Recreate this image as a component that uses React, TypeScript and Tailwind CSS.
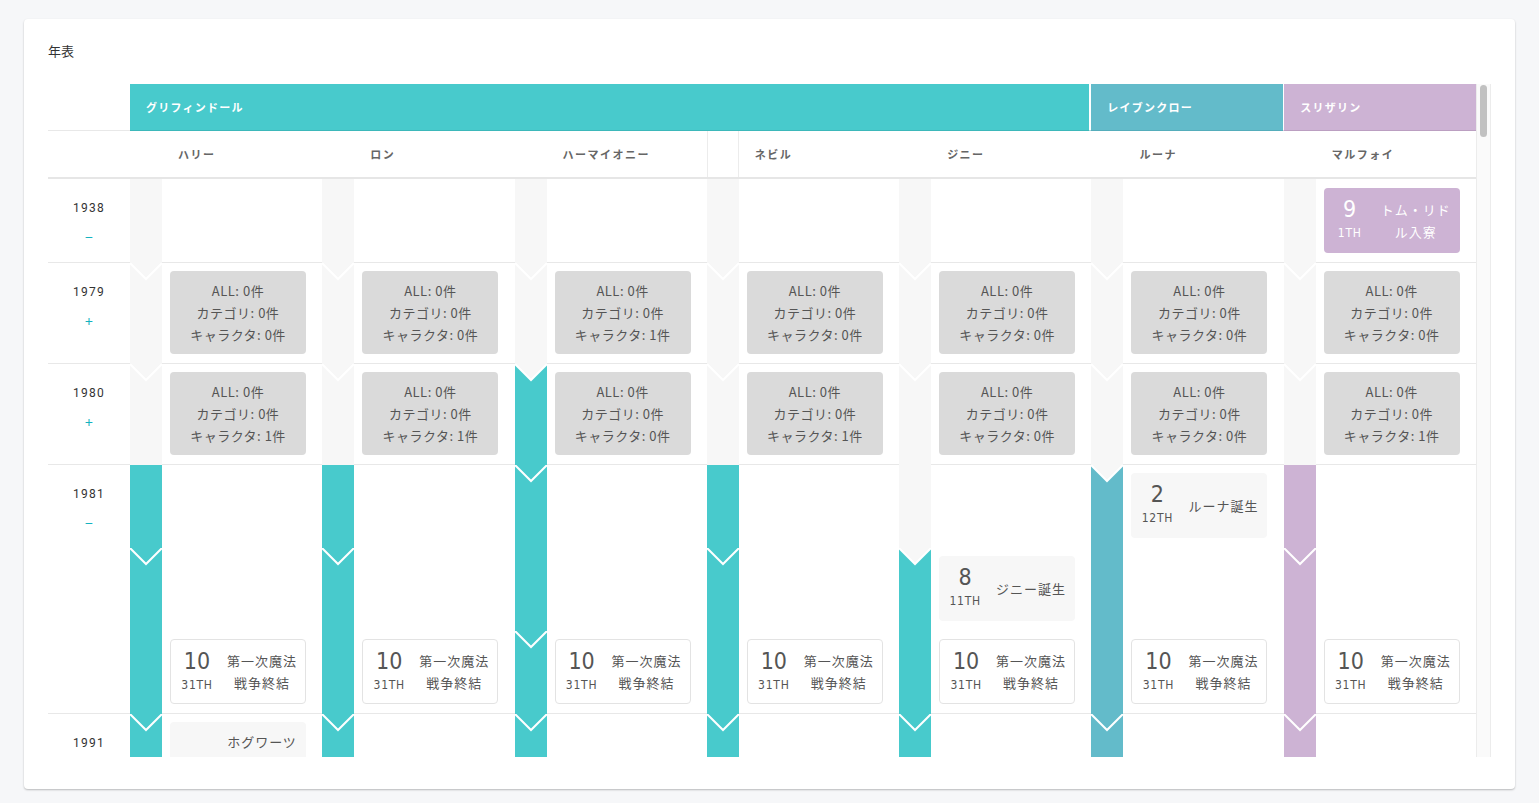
import React from 'react';

type Tone = 'g' | 't' | 'r' | 's';
type Kind = 'line' | 'soft' | 'sly';

interface Seg {
  c: Tone;
  top?: Tone;
  span?: 1 | 2 | 3;
}

interface Ev {
  m: string;
  d: string;
  lines: string[];
  kind: Kind;
  topText?: boolean;
}

const fill: Record<Tone, string> = { g: '#f7f7f7', t: '#48cacc', r: '#63bbca', s: '#cdb3d4' };
const bg: Record<Tone, string> = {
  g: 'bg-[#f7f7f7]',
  t: 'bg-[#48cacc]',
  r: 'bg-[#63bbca]',
  s: 'bg-[#cdb3d4]',
};
const grow = { 1: 'flex-1', 2: 'flex-[2]', 3: 'flex-[3]' };
const kindCls: Record<Kind, string> = {
  line: 'bg-white border border-[#e3e3e3] text-[#555]',
  soft: 'bg-[#f7f7f7] text-[#555]',
  sly: 'bg-[#cdb3d4] text-white',
};

// bar segments per column, one list per year row
const plain: Seg[][] = [
  [{ c: 'g' }],
  [{ c: 'g', top: 'g' }],
  [{ c: 'g', top: 'g' }],
  [{ c: 't' }, { c: 't', top: 't', span: 2 }],
  [{ c: 't', top: 't' }],
];

const columns: { name: string; bars: Seg[][]; framed?: boolean }[] = [
  { name: 'ハリー', bars: plain },
  { name: 'ロン', bars: plain },
  {
    name: 'ハーマイオニー',
    bars: [
      [{ c: 'g' }],
      [{ c: 'g', top: 'g' }],
      [{ c: 't', top: 'g' }],
      [{ c: 't', top: 't', span: 2 }, { c: 't', top: 't' }],
      [{ c: 't', top: 't' }],
    ],
  },
  { name: 'ネビル', bars: plain, framed: true },
  {
    name: 'ジニー',
    bars: [
      [{ c: 'g' }],
      [{ c: 'g', top: 'g' }],
      [{ c: 'g', top: 'g' }],
      [{ c: 'g' }, { c: 't', top: 'g', span: 2 }],
      [{ c: 't', top: 't' }],
    ],
  },
  {
    name: 'ルーナ',
    bars: [
      [{ c: 'g' }],
      [{ c: 'g', top: 'g' }],
      [{ c: 'g', top: 'g' }],
      [{ c: 'r', top: 'g', span: 3 }],
      [{ c: 'r', top: 'r' }],
    ],
  },
  {
    name: 'マルフォイ',
    bars: [
      [{ c: 'g' }],
      [{ c: 'g', top: 'g' }],
      [{ c: 'g', top: 'g' }],
      [{ c: 's' }, { c: 's', top: 's', span: 2 }],
      [{ c: 's', top: 's' }],
    ],
  },
];

const war: Ev = { m: '10', d: '31TH', lines: ['第一次魔法', '戦争終結'], kind: 'line' };

const tally1979 = [[0, 0, 0], [0, 0, 0], [0, 0, 1], [0, 0, 0], [0, 0, 0], [0, 0, 0], [0, 0, 0]];
const tally1980 = [[0, 0, 1], [0, 0, 1], [0, 0, 0], [0, 0, 1], [0, 0, 0], [0, 0, 0], [0, 0, 1]];

const slots1981: (Ev | null)[][] = [
  [null, null, war],
  [null, null, war],
  [null, null, war],
  [null, null, war],
  [null, { m: '8', d: '11TH', lines: ['ジニー誕生'], kind: 'soft' }, war],
  [{ m: '2', d: '12TH', lines: ['ルーナ誕生'], kind: 'soft' }, null, war],
  [null, null, war],
];

const Chevron = ({ from }: { from: Tone }) => (
  <svg className="absolute left-0 top-0" width="32" height="18" viewBox="0 0 32 18">
    <polygon points="0,0 32,0 16,16" fill={fill[from]} />
    <polyline points="-1,-1 16,16 33,-1" fill="none" stroke="#fff" strokeWidth="2" />
  </svg>
);

const Bar = ({ segs }: { segs: Seg[] }) => (
  <div className="flex w-8 shrink-0 flex-col">
    {segs.map((s, i) => (
      <div key={i} className={`relative ${grow[s.span ?? 1]} ${bg[s.c]}`}>
        {s.top && <Chevron from={s.top} />}
      </div>
    ))}
  </div>
);

const EventCard = ({ ev }: { ev: Ev }) => (
  <div className={`flex h-[65px] w-[136px] rounded ${kindCls[ev.kind]}`}>
    <div className="flex w-[52px] shrink-0 flex-col items-center pt-[8px] font-['Liberation_Sans_Narrow','DejaVu_Sans_Condensed',sans-serif]">
      <span className="text-[23px] leading-[26px]">{ev.m}</span>
      <span className="mt-[4px] text-[12px] leading-[14px] tracking-[0.75px]">{ev.d}</span>
    </div>
    <div
      className={`flex flex-1 flex-col items-center pr-1 text-[13px] leading-[22px] tracking-[1px] ${
        ev.topText ? 'justify-start pt-[9px]' : 'justify-center'
      }`}
    >
      {ev.lines.map((l) => (
        <span key={l}>{l}</span>
      ))}
    </div>
  </div>
);

const Tally = ({ n }: { n: number[] }) => (
  <div className="flex h-[83px] w-[136px] flex-col items-center justify-center rounded bg-[#dadada] text-[13px] leading-[22px] tracking-[0.5px] text-[#555]">
    <span>ALL: {n[0]}件</span>
    <span>カテゴリ: {n[1]}件</span>
    <span>キャラクタ: {n[2]}件</span>
  </div>
);

const YearCell = ({ year, sign }: { year: string; sign?: string }) => (
  <div className="flex w-[82px] shrink-0 flex-col items-center border-b border-[#e8e8e8] pt-5">
    <span className="font-['Roboto',sans-serif] text-[12px] leading-[18px] tracking-[1.25px] text-[#333]">{year}</span>
    {sign && <span className="mt-[11px] text-[14px] leading-[18px] text-[#14b2c0]">{sign}</span>}
  </div>
);

const rows: { year: string; sign?: string; h: string; content: (i: number) => React.ReactNode }[] = [
  {
    year: '1938',
    sign: '−',
    h: 'h-[84px]',
    content: (i) => (
      <div className="flex h-full items-center">
        {i === 6 && <EventCard ev={{ m: '9', d: '1TH', lines: ['トム・リド', 'ル入寮'], kind: 'sly' }} />}
      </div>
    ),
  },
  { year: '1979', sign: '+', h: 'h-[101px]', content: (i) => <div className="pt-2"><Tally n={tally1979[i]} /></div> },
  { year: '1980', sign: '+', h: 'h-[101px]', content: (i) => <div className="pt-2"><Tally n={tally1980[i]} /></div> },
  {
    year: '1981',
    sign: '−',
    h: 'h-[249px]',
    content: (i) => (
      <div className="flex flex-col pt-2">
        {slots1981[i].map((ev, k) => (
          <div key={k} className="h-[83px]">
            {ev && <EventCard ev={ev} />}
          </div>
        ))}
      </div>
    ),
  },
  {
    year: '1991',
    h: 'h-[100px]',
    content: (i) => (
      <div className="pt-2">
        {i === 0 && <EventCard ev={{ m: '', d: '', lines: ['ホグワーツ'], kind: 'soft', topText: true }} />}
      </div>
    ),
  },
];

const bandText = 'ml-4 text-[11px] font-bold tracking-[1.25px] text-white';

const App: React.FC = () => {
  return (
    <div className="min-h-screen bg-[#f6f7f9] px-6 pt-[19px] pb-[14px] font-['Noto_Sans_CJK_JP',sans-serif]">
      <div className="flex h-[770px] flex-col rounded bg-white px-6 shadow-[0_1px_2px_rgba(0,0,0,0.25)]">
        <div className="h-[65px] shrink-0 pt-6 text-[13px] leading-[16px] text-[#333]">年表</div>

        <div className="flex h-[673px] shrink-0 overflow-hidden">
          <div className="min-w-0 flex-1">
            {/* house bands */}
            <div className="flex h-[47px]">
              <div className="w-[82px] shrink-0 border-b border-[#e8e8e8]" />
              <div className="flex min-w-0 flex-[5] items-center border-r border-b border-r-white border-b-[#3db8ba] bg-[#48cacc]">
                <span className={bandText}>グリフィンドール</span>
              </div>
              <div className="flex min-w-0 flex-1 items-center border-l border-b border-l-white border-b-[#55adbb] bg-[#63bbca]">
                <span className={bandText}>レイブンクロー</span>
              </div>
              <div className="flex min-w-0 flex-1 items-center border-l border-b border-l-white border-b-[#bb9fc1] bg-[#cdb3d4]">
                <span className={bandText}>スリザリン</span>
              </div>
            </div>

            {/* character names */}
            <div className="flex h-[48px] border-b-2 border-[#e6e6e6]">
              <div className="w-[82px] shrink-0" />
              {columns.map((col) => (
                <div key={col.name} className="flex min-w-0 flex-1">
                  <div className={`w-8 shrink-0 ${col.framed ? 'border-x border-[#ececec]' : ''}`} />
                  <div className="flex flex-1 items-center pl-4 text-[11px] font-bold tracking-[1.5px] text-[#666]">
                    {col.name}
                  </div>
                </div>
              ))}
            </div>

            {rows.map((row, r) => (
              <div key={row.year} className={`flex ${row.h}`}>
                <YearCell year={row.year} sign={row.sign} />
                {columns.map((col, i) => (
                  <div key={col.name} className="flex min-w-0 flex-1">
                    <Bar segs={col.bars[r]} />
                    <div className="min-w-0 flex-1 border-b border-[#e8e8e8] pl-2">{row.content(i)}</div>
                  </div>
                ))}
              </div>
            ))}
          </div>

          {/* scrollbar */}
          <div className="flex w-[15px] shrink-0 justify-center border-x border-[#ececec] bg-[#fafafa]">
            <div className="mt-[1px] h-[52px] w-[7px] rounded-full bg-[#c1c1c1]" />
          </div>
        </div>
      </div>
    </div>
  );
};

export default App;
